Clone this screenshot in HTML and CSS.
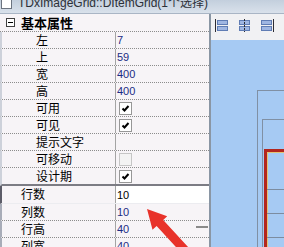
FILE: index.html
```html
<!DOCTYPE html>
<html lang="zh">
<head>
    <meta charset="UTF-8">
    <meta name="viewport" content="width=device-width, initial-scale=1.0">
    <title>DItemGrid</title>
    <link rel="stylesheet" href="styles.css">
</head>
<body>
<div class="window">
    <div class="titlebar">
        <span class="app-icon"></span>
        <span class="title">TDxImageGrid::DItemGrid(1个选择)</span>
    </div>

    <div class="main">
        <div class="inspector">
            <div class="group"><span class="toggle"></span>基本属性</div>
            <div class="row"><div class="name">左</div><div class="val">7</div></div>
            <div class="row"><div class="name">上</div><div class="val">59</div></div>
            <div class="row"><div class="name">宽</div><div class="val">400</div></div>
            <div class="row"><div class="name">高</div><div class="val">400</div></div>
            <div class="row"><div class="name">可用</div><div class="val"><span class="check"><svg viewBox="0 0 9 9" width="9" height="9"><path d="M1.5 4.5 L3.5 6.5 L7.5 2"/></svg></span></div></div>
            <div class="row"><div class="name">可见</div><div class="val"><span class="check"><svg viewBox="0 0 9 9" width="9" height="9"><path d="M1.5 4.5 L3.5 6.5 L7.5 2"/></svg></span></div></div>
            <div class="row"><div class="name">提示文字</div><div class="val"></div></div>
            <div class="row"><div class="name">可移动</div><div class="val"><span class="check off"></span></div></div>
            <div class="row last"><div class="name">设计期</div><div class="val"><span class="check"><svg viewBox="0 0 9 9" width="9" height="9"><path d="M1.5 4.5 L3.5 6.5 L7.5 2"/></svg></span></div></div>

            <div class="row sub sel"><div class="name">行数</div><div class="val">10</div></div>
            <div class="row sub"><div class="name">列数</div><div class="val">10</div></div>
            <div class="row sub"><div class="name">行高</div><div class="val">40<span class="dash"></span></div></div>
            <div class="row sub"><div class="name">列宽</div><div class="val">40</div></div>
        </div>

        <div class="designer">
            <div class="toolbar">
                <!-- align left -->
                <svg width="16" height="14" viewBox="0 0 16 14">
                    <line x1="1.5" y1="0" x2="1.5" y2="13" class="guide"/>
                    <rect x="3.5" y="1.5" width="10" height="4" class="bar"/>
                    <rect x="3.5" y="7.5" width="10" height="4" class="bar"/>
                </svg>
                <!-- align center -->
                <svg width="16" height="14" viewBox="0 0 16 14">
                    <rect x="2.5" y="1.5" width="10" height="4" class="bar"/>
                    <rect x="2.5" y="7.5" width="10" height="4" class="bar"/>
                    <line x1="7.5" y1="0" x2="7.5" y2="13" class="guide dashed"/>
                </svg>
                <!-- align right -->
                <svg width="16" height="14" viewBox="0 0 16 14">
                    <rect x="1.5" y="1.5" width="10" height="4" class="bar"/>
                    <rect x="1.5" y="7.5" width="10" height="4" class="bar"/>
                    <line x1="13.5" y1="0" x2="13.5" y2="13" class="guide"/>
                </svg>
            </div>
            <div class="canvas">
                <div class="frame-outer">
                    <div class="frame-inner">
                        <div class="grid-box">
                            <div class="cell first"></div>
                            <div class="cell"></div>
                            <div class="cell"></div>
                        </div>
                    </div>
                </div>
            </div>
        </div>
    </div>

    <svg class="arrow" width="284" height="247" viewBox="0 0 284 247">
        <polygon points="147,209 167.2,216.2 163.2,220 190.9,250.1 184.3,256.1 156.6,226 152.5,229.8"/>
    </svg>
</div>
</body>
</html>
```

FILE: styles.css
```css
body {
    margin: 0;
    font-family: "Noto Sans CJK SC", sans-serif;
    font-size: 12px;
    background: #f7f4f7;
}
.window {
    position: relative;
    width: 284px;
    height: 247px;
    overflow: hidden;
}

/* title bar, cut off at the top */
.titlebar {
    height: 13px;
    display: flex;
    overflow: hidden;
    background: linear-gradient(#c3cfdd, #d9e1eb);
    border-bottom: 1px solid #a9b5c5;
}
.app-icon {
    width: 9px;
    height: 8px;
    margin-left: 1px;
    border: 1px solid #6c7480;
    border-top: 0;
    background: #fff;
}
.title {
    margin-left: 6px;
    margin-top: -3px;
    font-family: "Liberation Sans", Arial, "Noto Sans CJK SC", sans-serif;
    font-size: 12px;
    line-height: 13px;
    color: #2c3038;
    white-space: nowrap;
}

.main {
    display: flex;
    height: 233px;
}

/* property inspector */
.inspector {
    flex: none;
    width: 209px;
    border-right: 2px solid #8a96a4;
}
.group {
    height: 17px;
    display: flex;
    align-items: center;
    padding-left: 6px;
    border-bottom: 1px dotted #8c8c8c;
    font-size: 13px;
    font-weight: bold;
}
.toggle {
    position: relative;
    width: 7px;
    height: 7px;
    margin-right: 6px;
    border: 1px solid #404040;
    background: #fff;
}
.toggle::after {
    content: "";
    position: absolute;
    left: 1px;
    top: 3px;
    width: 5px;
    height: 1px;
    background: #000;
}
.row {
    display: grid;
    grid-template-columns: 114px 1fr;
    height: 16px;
    line-height: 16px;
    border-left: 2px solid #cdd1da;
    border-bottom: 1px dotted #8c8c8c;
}
.name {
    padding-left: 34px;
    border-right: 1px solid #a4a4a4;
    white-space: nowrap;
}
.val {
    display: flex;
    align-items: center;
    padding-left: 1px;
    font-family: "Liberation Sans", Arial, sans-serif;
    font-size: 11px;
    color: #1c2c84;
}
.row.last {
    border-bottom: 2px solid #7c7c84;
}
.row.sub {
    border-left-color: #a8acb8;
}
.row.sub .name {
    padding-left: 19px;
}
.row.sel {
    height: 17px;
    border-left-color: #5c5c68;
    border-bottom: 1px solid #ececf0;
}
.row.sel .val {
    background: #fff;
    color: #000;
}
.check {
    width: 11px;
    height: 11px;
    margin-left: 2px;
    display: flex;
    align-items: center;
    justify-content: center;
    border: 1px solid #979797;
    background: #fff;
}
.check path {
    fill: none;
    stroke: #000;
    stroke-width: 2;
}
.check.off {
    border-color: #c6c6c6;
    background: #f3f3f3;
}
.dash {
    width: 12px;
    height: 2px;
    margin-left: auto;
    margin-right: 1px;
    align-self: flex-start;
    margin-top: 5px;
    background: #8a8a8a;
}

/* designer */
.designer {
    flex: 1;
    min-width: 0;
    display: flex;
    flex-direction: column;
}
.toolbar {
    height: 21px;
    padding: 5px 0 0 3px;
    display: flex;
    align-items: flex-start;
    gap: 7px;
    background: #f1f1f3;
}
.toolbar svg {
    flex: none;
}
.toolbar .bar {
    fill: #9fb6e2;
    stroke: #5f7cb4;
}
.toolbar .guide {
    stroke: #2c2c34;
}
.toolbar .dashed {
    stroke-dasharray: 2 1;
}
.canvas {
    flex: 1;
    overflow: hidden;
    padding: 50px 0 0 46px;
    background: #a6caf3;
}
.frame-outer {
    width: 80px;
    height: 200px;
    padding: 28px 0 0 4px;
    border-left: 1px solid #8090a4;
    border-top: 1px solid #8090a4;
}
.frame-inner {
    height: 200px;
    padding: 29px 0 0 1px;
    border-left: 1px solid #8090a4;
    border-top: 1px solid #8090a4;
}
.grid-box {
    height: 200px;
    border-left: 3px solid #b3261e;
    border-top: 3px solid #b3261e;
    box-shadow: inset 1px 1px 0 #e2c476;
}
.cell {
    height: 23px;
    border-bottom: 1px solid #7c8ca0;
}
.cell.first {
    height: 37px;
}

.arrow {
    position: absolute;
    left: 0;
    top: 0;
    pointer-events: none;
}
.arrow polygon {
    fill: #e8322a;
}
```
